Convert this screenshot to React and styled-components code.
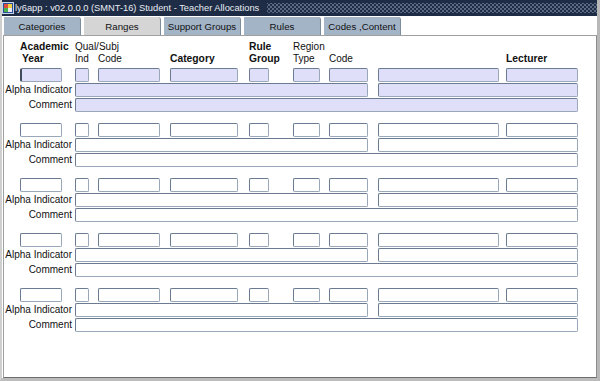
import React from 'react';
import styled, {createGlobalStyle} from 'styled-components';

const GlobalStyle = createGlobalStyle`
  html, body {
    margin: 0;
    padding: 0;
    background: #ffffff;
  }
  body {
    font-family: "Liberation Sans", Arial, sans-serif;
  }
`;

const colors = {
  title: '#1f2c45',
  tab: '#a3b4c7',
  tabActive: '#d5d5d5',
  frame: '#cfcfcf',
  fieldBorder: '#6b7b92',
  fieldLight: '#9aa7b8',
  current: '#e0dff9',
  text: '#111111',
};

// x positions and widths of the record's top line, as in the screen
const columns = [
  {x: 20, w: 42, line1: 'Academic', line2: 'Year', bold: true, indent2: 2},
  {x: 75, w: 14, line1: 'Qual/Subj', line2: 'Ind'},
  {x: 98, w: 62, line2: 'Code'},
  {x: 170, w: 68, line2: 'Category', bold: true},
  {x: 249, w: 20, line1: 'Rule', line2: 'Group', bold: true},
  {x: 293, w: 27, line1: 'Region', line2: 'Type'},
  {x: 329, w: 39, line2: 'Code'},
  {x: 378, w: 121},
  {x: 506, w: 72, line2: 'Lecturer', bold: true},
];

const CONTENT_LEFT = 4;

const Window = styled.div`
  width: 600px;
  height: 381px;
  box-sizing: border-box;
  display: flex;
  flex-direction: column;
  background: #ffffff;
  border-left: 2px solid ${colors.frame};
  border-right: 3px solid #b8b8b8;
  border-bottom: 3px solid #bcbcbc;
  overflow: hidden;
`;

const TitleBar = styled.div`
  height: 16px;
  margin-left: -2px;
  display: flex;
  align-items: center;
  background-color: ${colors.title};
  color: #e8ecf3;
  font-size: 9.3px;
  white-space: nowrap;
`;

const TitleIcon = styled.svg`
  width: 12px;
  height: 12px;
  margin: 0 1px 0 2px;
  flex: none;
`;

const TitleText = styled.span`
  padding-right: 8px;
`;

const Dots = styled.div`
  flex: 1;
  align-self: stretch;
  margin: 3px 0 3px 0;
  background-image: radial-gradient(circle, #7e8aa0 0.6px, transparent 0.9px),
    radial-gradient(circle, #7e8aa0 0.6px, transparent 0.9px);
  background-size: 4px 4px;
  background-position: 0 0, 2px 2px;
`;

const TabRow = styled.div`
  display: flex;
  gap: 2px;
  height: 18px;
  padding: 1px 0 0 1px;
`;

const Tab = styled.div`
  width: 78px;
  box-sizing: border-box;
  display: flex;
  align-items: center;
  justify-content: center;
  font-size: 9.7px;
  color: ${colors.text};
  background: ${(p) => (p.$active ? colors.tabActive : colors.tab)};
  border-left: 1px solid #ffffff;
  border-right: 1px solid #7f8c9c;
  border-top-right-radius: 3px;
  white-space: nowrap;
`;

const Panel = styled.div`
  flex: 1;
  margin: 0 0 0 1px;
  border: 1px solid #a0a0a0;
  border-right-color: #8c8c8c;
  border-bottom-color: #6c6c6c;
  padding-top: 4px;
  font-size: 10px;
  color: ${colors.text};
`;

const Header = styled.div`
  display: flex;
  height: 26px;
  margin-bottom: 1px;
`;

const HeadCell = styled.div`
  flex: none;
  width: ${(p) => p.$w}px;
  margin-left: ${(p) => p.$ml}px;
  display: flex;
  flex-direction: column;
  padding-top: 1px;
  font-weight: ${(p) => (p.$bold ? 'bold' : 'normal')};
  font-size: ${(p) => (p.$bold ? '10.3px' : '10px')};
  line-height: 12px;
  white-space: nowrap;
`;

const HeadLine = styled.span`
  height: 12px;
  padding-left: ${(p) => p.$indent || 0}px;
`;

const Group = styled.div`
  display: flex;
  flex-direction: column;
  margin-bottom: 10px;
`;

const Row = styled.div`
  display: flex;
  align-items: center;
  height: 15px;
`;

const Label = styled.div`
  flex: none;
  width: ${72 - CONTENT_LEFT}px;
  text-align: right;
  white-space: nowrap;
  margin-right: 3px;
`;

const Field = styled.div`
  flex: none;
  box-sizing: border-box;
  width: ${(p) => p.$w}px;
  height: 14px;
  margin-left: ${(p) => p.$ml || 0}px;
  background: ${(p) => (p.$current ? colors.current : '#ffffff')};
  border: 1px solid ${colors.fieldBorder};
  border-bottom-color: ${colors.fieldLight};
  border-right-color: ${colors.fieldLight};
  border-left-width: ${(p) => (p.$focus ? 2 : 1)}px;
  border-left-color: ${(p) => (p.$focus ? '#3f4a5c' : colors.fieldBorder)};
  border-radius: 2px;
`;

const withMargins = columns.map((c, i) => {
  const prevEnd = i === 0 ? CONTENT_LEFT : columns[i - 1].x + columns[i - 1].w;
  return {...c, ml: c.x - prevEnd};
});

const Record = ({current}) => (
  <Group>
    <Row>
      {withMargins.map((c, i) => (
        <Field key={i} $w={c.w} $ml={c.ml} $current={current} $focus={current && i === 0} />
      ))}
    </Row>
    <Row>
      <Label>Alpha Indicator</Label>
      <Field $w={293} $current={current} />
      <Field $w={200} $ml={10} $current={current} />
    </Row>
    <Row>
      <Label>Comment</Label>
      <Field $w={503} $current={current} />
    </Row>
  </Group>
);

const tabs = ['Categories', 'Ranges', 'Support Groups', 'Rules', 'Codes ,Content'];

const App = () => (
  <>
    <GlobalStyle />
    <Window>
      <TitleBar>
        <TitleIcon viewBox='0 0 12 12'>
          <rect x='0.5' y='0.5' width='11' height='11' fill='#2a4f9c' stroke='#c8d2e6' />
          <rect x='2' y='2' width='4' height='4' fill='#e04a3a' />
          <rect x='6' y='2' width='4' height='4' fill='#f2d23c' />
          <rect x='2' y='6' width='4' height='4' fill='#4cb04a' />
          <rect x='6' y='6' width='4' height='4' fill='#e8e8f0' />
        </TitleIcon>
        <TitleText>ly6app : v02.0.0.0 (SMNT-16) Student - Teacher Allocations</TitleText>
        <Dots />
      </TitleBar>
      <TabRow>
        {tabs.map((t) => (
          <Tab key={t} $active={t === 'Ranges'}>
            {t}
          </Tab>
        ))}
      </TabRow>
      <Panel>
        <Header>
          {withMargins.map((c, i) => (
            <HeadCell key={i} $w={c.w} $ml={c.ml} $bold={c.bold}>
              <HeadLine>{c.line1 || ''}</HeadLine>
              <HeadLine $indent={c.indent2}>{c.line2 || ''}</HeadLine>
            </HeadCell>
          ))}
        </Header>
        {[0, 1, 2, 3, 4].map((n) => (
          <Record key={n} current={n === 0} />
        ))}
      </Panel>
    </Window>
  </>
);

export default App;
